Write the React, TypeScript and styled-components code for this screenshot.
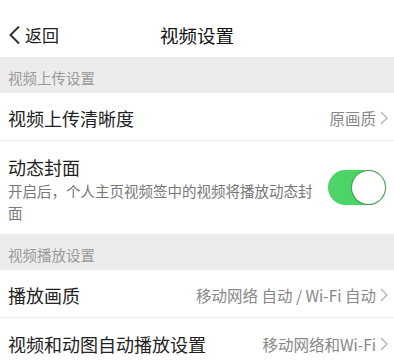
import React, { useState } from "react";
import styled, { createGlobalStyle } from "styled-components";

const Global = createGlobalStyle`
  html, body { margin: 0; padding: 0; background: #ffffff; }
  body { font-family: "Noto Sans CJK SC", "Noto Sans", sans-serif; -webkit-font-smoothing: antialiased; }
  * { box-sizing: border-box; }
`;

const Page = styled.div`
  width: 394px;
  background: #ffffff;
  overflow: hidden;
`;

const Header = styled.header`
  position: relative;
  height: 57px;
  padding: 12px 8px 0;
  display: flex;
  align-items: center;
  background: #ffffff;
`;

const Back = styled.div`
  display: flex;
  align-items: center;
  gap: 4px;
  font-size: 17px;
  color: #222;
  line-height: 24px;
`;

const Title = styled.h1`
  position: absolute;
  left: 0;
  right: 0;
  top: 12px;
  bottom: 0;
  margin: 0;
  display: flex;
  align-items: center;
  justify-content: center;
  font-size: 18.5px;
  font-weight: 400;
  color: #111;
  pointer-events: none;
`;

const SectionHead = styled.div`
  height: 36px;
  padding: 4px 8px 0;
  display: flex;
  align-items: center;
  background: #ececec;
  color: #9a9a9a;
  font-size: 14.5px;
`;

const Row = styled.div<{ $last?: boolean }>`
  height: 48px;
  padding: 3px 6px 0 8px;
  display: flex;
  align-items: center;
  justify-content: space-between;
  background: #fff;
  border-bottom: ${(p) => (p.$last ? "none" : "1px solid #f0f0f0")};
`;

const Label = styled.span`
  font-size: 18px;
  color: #222;
  white-space: nowrap;
`;

const Value = styled.span`
  display: flex;
  align-items: center;
  gap: 4px;
  font-size: 15.5px;
  color: #888;
  white-space: nowrap;
`;

const ToggleRow = styled.div`
  height: 93px;
  padding: 14px 8px 0 8px;
  display: flex;
  align-items: flex-start;
  gap: 10px;
  background: #fff;
`;

const ToggleText = styled.div`
  flex: 1;
  display: flex;
  flex-direction: column;
`;

const ToggleLabel = styled.span`
  font-size: 18px;
  line-height: 25px;
  color: #222;
`;

const Desc = styled.span`
  font-size: 14.5px;
  line-height: 22px;
  color: #777;
`;

const Switch = styled.button<{ $on: boolean }>`
  flex: none;
  margin-top: 15px;
  width: 58px;
  height: 35px;
  border: none;
  padding: 1px;
  border-radius: 18px;
  background: ${(p) => (p.$on ? "#4cd466" : "#e5e5e5")};
  display: flex;
  justify-content: ${(p) => (p.$on ? "flex-end" : "flex-start")};
  align-items: center;
  cursor: pointer;
`;

const Knob = styled.span`
  width: 33px;
  height: 33px;
  border-radius: 50%;
  background: #fff;
  box-shadow: 0 0 0 1px rgba(60, 120, 70, 0.55), 0 1px 2px rgba(0, 0, 0, 0.15);
`;

const Chevron = () => (
  <svg width="8" height="14" viewBox="0 0 8 14" fill="none">
    <polyline points="1,1 7,7 1,13" stroke="#b0b0b0" strokeWidth="1.3" strokeLinejoin="miter" />
  </svg>
);

const BackArrow = () => (
  <svg width="13" height="20" viewBox="0 0 13 20" fill="none">
    <polyline points="11,1.5 2.5,10 11,18.5" stroke="#333" strokeWidth="2" />
  </svg>
);

export default function App() {
  const [on, setOn] = useState(true);
  return (
    <Page>
      <Global />
      <Header>
        <Back>
          <BackArrow />
          <span>返回</span>
        </Back>
        <Title>视频设置</Title>
      </Header>
      <SectionHead>视频上传设置</SectionHead>
      <Row>
        <Label>视频上传清晰度</Label>
        <Value>
          原画质
          <Chevron />
        </Value>
      </Row>
      <ToggleRow>
        <ToggleText>
          <ToggleLabel>动态封面</ToggleLabel>
          <Desc>开启后，个人主页视频签中的视频将播放动态封面</Desc>
        </ToggleText>
        <Switch $on={on} onClick={() => setOn(!on)} aria-label="动态封面">
          <Knob />
        </Switch>
      </ToggleRow>
      <SectionHead>视频播放设置</SectionHead>
      <Row>
        <Label>播放画质</Label>
        <Value>
          移动网络 自动 / Wi-Fi 自动
          <Chevron />
        </Value>
      </Row>
      <Row $last>
        <Label>视频和动图自动播放设置</Label>
        <Value>
          移动网络和Wi-Fi
          <Chevron />
        </Value>
      </Row>
    </Page>
  );
}
